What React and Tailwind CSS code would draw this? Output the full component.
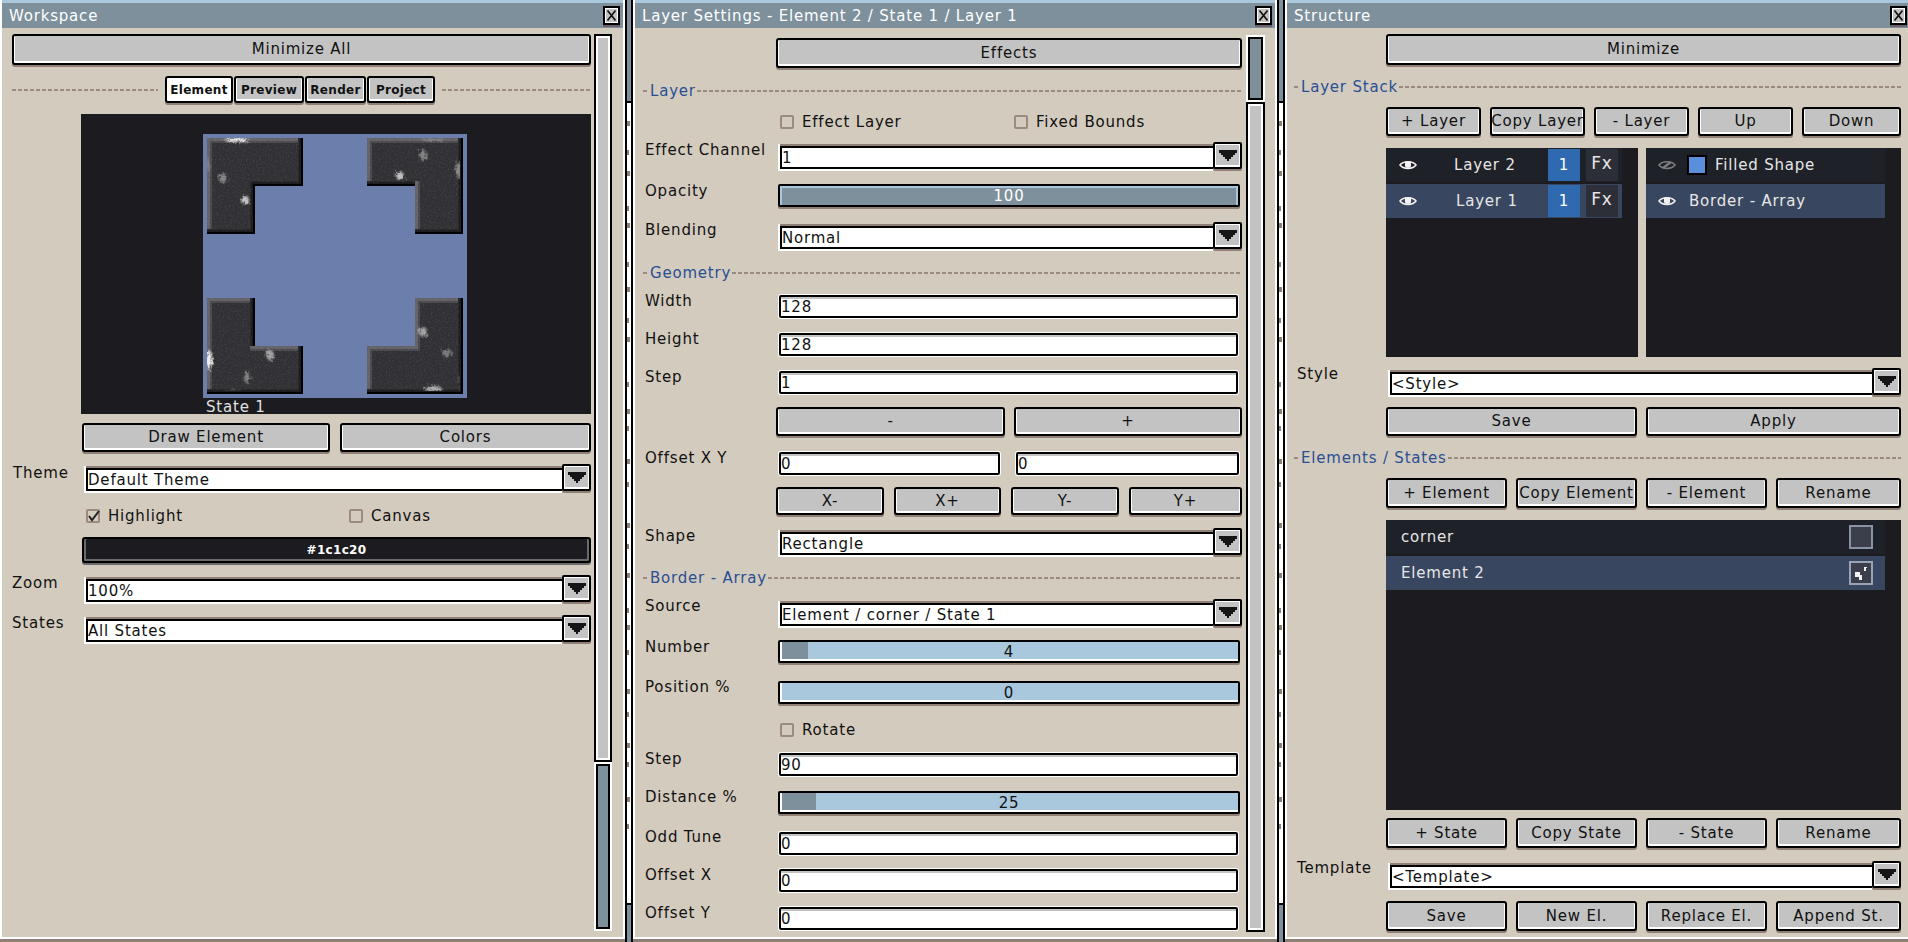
// shared button look: black outline, white inner edge, brown drop line
const btn =
  "flex items-center justify-center overflow-hidden whitespace-nowrap border-2 border-black rounded-[3px] bg-[#c3c3c3] text-[#111] shadow-[inset_1px_-2px_0_#fff,inset_-1px_0_0_#fff,0_2px_0_#8f7f75]";

function Button({ children, className = "" }) {
  return <div className={`${btn} ${className}`}>{children}</div>;
}

function Label({ children, className = "" }) {
  return <div className={`h-[16px] leading-[16px] whitespace-nowrap text-[#111] ${className}`}>{children}</div>;
}

function Dashes({ className = "" }) {
  return (
    <div className={`h-[2px] bg-[repeating-linear-gradient(90deg,#9a8a80_0_4px,transparent_4px_6px)] ${className}`} />
  );
}

function Section({ title, className = "" }) {
  return (
    <div className={`flex h-[16px] items-center ${className}`}>
      <Dashes className="w-[6px] shrink-0" />
      <span className="px-[1px] leading-[16px] text-[#2a4f94]">{title}</span>
      <Dashes className="flex-1" />
    </div>
  );
}

function Dropdown({ value, className = "" }) {
  return (
    <div className={`flex h-[29px] flex-1 ${className}`}>
      <div className="mt-[2px] h-[27px] min-w-0 flex-1 border-y-2 border-l-2 border-white">
        <div className="flex h-[23px] items-center border-y-2 border-l-2 border-black bg-white pt-[2px] leading-none whitespace-nowrap text-[#111] shadow-[0_-2px_0_#8f7f75]">
          {value}
        </div>
      </div>
      <div className="flex h-[27px] w-[29px] shrink-0 items-center justify-center rounded-[2px] border-2 border-black bg-[#c3c3c3] shadow-[inset_1px_1px_0_#fff,inset_-1px_-2px_0_#fff,0_2px_0_#8f7f75]">
        <svg width="18" height="11" viewBox="0 0 18 11">
          <path d="M0 0h18v3h-2v2h-2v2h-2v2h-2v2H8V9H6V7H4V5H2V3H0z" fill="#151515" />
        </svg>
      </div>
    </div>
  );
}

function TextInput({ value, className = "" }) {
  return (
    <div className={`h-[23px] rounded-[2px] border-2 border-black bg-white leading-none whitespace-nowrap text-[#111] shadow-[0_0_0_1px_#fff,inset_0_2px_0_#c3c3c3] ${className}`}>
      <div className="flex h-full items-center pt-[1px]">{value}</div>
    </div>
  );
}

function Slider({ value, fill = 0, active, className = "" }) {
  return (
    <div className={`relative flex h-[23px] items-center justify-center rounded-[2px] border-2 border-black pt-[1px] leading-none shadow-[inset_2px_-2px_0_#fff,0_2px_0_#8f7f75] ${active ? "bg-[#7d909c] text-white shadow-[inset_2px_2px_0_#a9c8de,inset_-2px_0_0_#a9c8de,0_2px_0_#8f7f75]" : "bg-[#a9c8de] text-[#111]"} ${className}`}>
      {fill > 0 && <div className="absolute top-0 bottom-[2px] left-[2px] bg-[#7d909c]" style={{ width: fill }} />}
      <span className="relative">{value}</span>
    </div>
  );
}

function Check({ label, checked, className = "" }) {
  return (
    <div className={`flex h-[16px] items-center ${className}`}>
      <div className="relative h-[14px] w-[14px] shrink-0 rounded-[2px] border-2 border-[#9a8a80]">
        {checked && (
          <svg className="absolute -top-[3px] -left-[2px]" width="16" height="16" viewBox="0 0 16 16">
            <path d="M3 8l3 4 7-9" fill="none" stroke="#222" strokeWidth="2" />
          </svg>
        )}
      </div>
      <span className="ml-[8px] leading-[16px] whitespace-nowrap text-[#111]">{label}</span>
    </div>
  );
}

function Scrollbar({ thumbFirst, thumbClass, className = "" }) {
  const thumb = (
    <div className={`shrink-0 border-2 border-white ${thumbClass}`}>
      <div className="h-full border-2 border-black bg-[#7d909c]" />
    </div>
  );
  return (
    <div className={`flex shrink-0 flex-col ${className}`}>
      {thumbFirst && thumb}
      <div className="flex-1 border-2 border-black bg-[#c3c3c3] shadow-[inset_2px_2px_0_#fff,inset_-2px_-2px_0_#fff]" />
      {!thumbFirst && thumb}
    </div>
  );
}

function TitleBar({ title, className = "" }) {
  return (
    <div className={`flex h-[28px] shrink-0 items-start justify-between border-t-[3px] border-[#a9c7dd] bg-[#7d909c] pl-[7px] text-white ${className}`}>
      <span className="mt-[5px] leading-[16px] whitespace-nowrap">{title}</span>
      <div className="mt-[3px] flex h-[19px] w-[17px] items-center justify-center border-2 border-black bg-[#c3c3c3] shadow-[inset_0_0_0_1px_#fff,0_2px_0_#6e6068]">
        <svg width="9" height="11" viewBox="0 0 9 11">
          <path d="M0.5 0.5l8 10M8.5 0.5l-8 10" stroke="#111" strokeWidth="1.6" fill="none" />
        </svg>
      </div>
    </div>
  );
}

// the marble L pieces in the element preview
const S = 96;
const A = 48;
function lPoints(kind, x, y, [l, t, r, b]) {
  const p = {
    tl: [[l, t], [S - r, t], [S - r, A - b], [A - r, A - b], [A - r, S - b], [l, S - b]],
    tr: [[l, t], [S - r, t], [S - r, S - b], [S - A + l, S - b], [S - A + l, A - b], [l, A - b]],
    bl: [[l, t], [A - r, t], [A - r, S - A + t], [S - r, S - A + t], [S - r, S - b], [l, S - b]],
    br: [[S - A + l, t], [S - r, t], [S - r, S - b], [l, S - b], [l, S - A + t], [S - A + l, S - A + t]],
  }[kind];
  return p.map(([a, c]) => `${x + a},${y + c}`).join(" ");
}

const corners = [
  { kind: "tl", x: 4, y: 4, blobs: [[34, 6, 12, 2, 0.9], [20, 44, 4, 5, 0.4], [42, 66, 4, 4, 0.7], [5, 30, 1, 8, 0.25]] },
  { kind: "tr", x: 164, y: 4, blobs: [[220, 21, 3, 6, 0.4], [197, 42, 4, 4, 0.7], [256, 36, 3, 9, 0.45], [230, 6, 12, 1, 0.3]] },
  { kind: "bl", x: 4, y: 164, blobs: [[6, 226, 3, 10, 0.9], [67, 221, 4, 5, 0.55], [44, 243, 3, 6, 0.4], [30, 257, 8, 1, 0.2]] },
  { kind: "br", x: 164, y: 164, blobs: [[220, 198, 4, 5, 0.55], [244, 219, 5, 4, 0.35], [230, 255, 9, 3, 0.6], [258, 250, 2, 8, 0.2]] },
];

function Preview() {
  return (
    <svg width="264" height="264" viewBox="0 0 264 264" className="block shrink-0">
      <defs>
        <filter id="speck" x="0" y="0" width="100%" height="100%">
          <feTurbulence type="fractalNoise" baseFrequency="0.6" numOctaves="2" seed="4" />
          <feColorMatrix values="0 0 0 0 1  0 0 0 0 1  0 0 0 0 1  0 0 0 0.7 -0.33" />
        </filter>
        <filter id="soft" x="-60%" y="-60%" width="220%" height="220%">
          <feGaussianBlur stdDeviation="1.2" result="b" />
          <feTurbulence type="fractalNoise" baseFrequency="0.35" numOctaves="2" seed="9" />
          <feDisplacementMap in="b" scale="7" />
        </filter>
        {corners.map((c) => (
          <clipPath id={`clip-${c.kind}`} key={c.kind}>
            <polygon points={lPoints(c.kind, c.x, c.y, [0, 0, 3, 3])} />
          </clipPath>
        ))}
      </defs>
      <rect width="264" height="264" fill="#6b7eac" />
      {corners.map((c) => (
        <g key={c.kind}>
          <g shapeRendering="crispEdges">
            <polygon points={lPoints(c.kind, c.x, c.y, [0, 0, 0, 0])} fill="#000" />
            <polygon points={lPoints(c.kind, c.x, c.y, [0, 0, 2, 2])} fill="#1d1d20" />
            <polygon points={lPoints(c.kind, c.x, c.y, [0, 0, 4, 4])} fill="#28282b" />
            <polygon points={lPoints(c.kind, c.x, c.y, [0, 0, 5, 5])} fill="#636367" />
            <polygon points={lPoints(c.kind, c.x, c.y, [3, 3, 5, 5])} fill="#4a4a4e" />
            <polygon points={lPoints(c.kind, c.x, c.y, [5, 5, 5, 5])} fill="#313135" />
          </g>
          <g clipPath={`url(#clip-${c.kind})`}>
            <rect x={c.x} y={c.y} width={S} height={S} filter="url(#speck)" opacity="0.35" />
            {c.blobs.map(([cx, cy, rx, ry, o], i) => (
              <ellipse key={i} cx={cx} cy={cy} rx={rx} ry={ry} fill="#fff" opacity={o} filter="url(#soft)" />
            ))}
          </g>
        </g>
      ))}
    </svg>
  );
}

function Eye({ off }) {
  const c = off ? "#7c7c80" : "#f2f2f2";
  return (
    <svg width="18" height="12" viewBox="0 0 18 12" className="shrink-0">
      <path d="M1 6C4 1.5 14 1.5 17 6C14 10.5 4 10.5 1 6Z" fill="none" stroke={c} strokeWidth="1.5" />
      {off ? (
        <path d="M5 9L13 3" stroke={c} strokeWidth="2.4" />
      ) : (
        <path d="M6 2.5h6v4a3 2.5 0 0 1-6 0z" fill={c} />
      )}
    </svg>
  );
}

function LayerRow({ name, selected, nameClass }) {
  return (
    <div className={`flex h-[34px] w-[236px] items-center pl-[13px] ${selected ? "bg-[#39465f]" : "bg-[#1f2128]"}`}>
      <Eye />
      <span className={`leading-none whitespace-nowrap text-[#e6e6e6] ${nameClass}`}>{name}</span>
      <div className="ml-auto flex h-[32px] w-[32px] items-center justify-center bg-[#2f6ab0] text-white">1</div>
      <div className="mr-[4px] ml-[6px] flex h-[32px] w-[32px] items-start justify-center bg-[#2d2f38] pt-[6px] text-[17px] leading-none text-[#e6e6e6]">Fx</div>
    </div>
  );
}

const gapMarks = [18, 24, 16, 30, 12, 34, 20, 26, 14, 40, 22, 12, 28, 18, 36, 16, 24, 30, 12, 20, 34, 18, 26, 14, 30, 22];

function GapColumn() {
  return (
    <div className="flex w-[8px] shrink-0 flex-col border-x-2 border-black bg-white">
      <div className="h-[103px] shrink-0 border-b-2 border-black bg-[#7d909c]" />
      <div className="flex-1 overflow-hidden">
        {gapMarks.map((m, i) => (
          <div key={i} className={`h-[5px] bg-[#8f7f75] ${i % 2 ? "w-[2px]" : "w-[3px]"}`} style={{ marginTop: m }} />
        ))}
      </div>
      <div className="h-[39px] shrink-0 border-t-2 border-black bg-[#7d909c]" />
    </div>
  );
}

function Panel({ width, title, titleClass, children, noRight }) {
  return (
    <div className={`flex h-[942px] shrink-0 flex-col ${width}`}>
      <div className={`flex min-h-0 flex-1 flex-col border-b-2 border-l-2 border-white ${noRight ? "" : "border-r-2"}`}>
        <TitleBar title={title} className={titleClass} />
        <div className="flex min-h-0 flex-1">{children}</div>
      </div>
      <div className="h-[3px] shrink-0 bg-[#8f7f75]" />
    </div>
  );
}

function Workspace() {
  return (
    <Panel width="w-[625px]" title="Workspace" titleClass="pr-[3px]">
      <div className="ml-[10px] w-[579px]">
        <Button className="mt-[6px] h-[31px]">Minimize All</Button>

        <div className="mt-[11px] flex h-[27px] items-center">
          <Dashes className="w-[146px]" />
          <div className="ml-[7px] flex gap-[1px] text-[12px] font-bold tracking-[0.3px]">
            <Button className="h-[27px] w-[68px] bg-white">Element</Button>
            <Button className="h-[27px] w-[70px]">Preview</Button>
            <Button className="h-[27px] w-[61px]">Render</Button>
            <Button className="h-[27px] w-[68px]">Project</Button>
          </div>
          <Dashes className="ml-[7px] flex-1" />
        </div>

        <div className="mt-[11px] ml-[69px] flex h-[300px] flex-col overflow-hidden bg-[#1c1c20] pt-[20px] pl-[122px]">
          <Preview />
          <div className="mt-[1px] ml-[3px] leading-[16px] text-[#e0e0e0]">State 1</div>
        </div>

        <div className="mt-[9px] ml-[70px] flex gap-[10px]">
          <Button className="h-[29px] w-[248px]">Draw Element</Button>
          <Button className="h-[29px] flex-1">Colors</Button>
        </div>

        <div className="mt-[12px] flex">
          <Label className="mt-[1px] w-[72px] pl-[1px]">Theme</Label>
          <Dropdown value="Default Theme" />
        </div>

        <div className="mt-[15px] ml-[74px] flex">
          <Check label="Highlight" checked className="w-[263px]" />
          <Check label="Canvas" />
        </div>

        <div className="mt-[13px] ml-[70px] flex h-[26px] items-center justify-center rounded-[3px] border-2 border-black bg-[#1c1c20] text-[12px] font-bold tracking-[0.3px] text-white shadow-[inset_2px_0_0_#6a6a6a,inset_-2px_-2px_0_#6a6a6a,0_2px_0_#6a6a6a]">
          #1c1c20
        </div>

        <div className="mt-[12px] flex">
          <Label className="w-[72px]">Zoom</Label>
          <Dropdown value="100%" />
        </div>

        <div className="mt-[11px] flex">
          <Label className="w-[72px]">States</Label>
          <Dropdown value="All States" />
        </div>
      </div>
      <Scrollbar thumbClass="h-[169px]" className="mt-[6px] ml-[3px] h-[897px] w-[18px]" />
    </Panel>
  );
}

function Row({ label, children, className = "", labelClass = "-mt-[2px]" }) {
  return (
    <div className={`flex ${className}`}>
      <Label className={`w-[133px] shrink-0 pl-[2px] ${labelClass}`}>{label}</Label>
      <div className="flex min-w-0 flex-1">{children}</div>
    </div>
  );
}

function LayerSettings() {
  return (
    <Panel width="w-[644px]" title="Layer Settings - Element 2 / State 1 / Layer 1" titleClass="pr-[3px]">
      <div className="ml-[8px] w-[599px]">
        <Button className="mt-[10px] ml-[133px] h-[30px]">Effects</Button>

        <Section title="Layer" className="mt-[15px]" />
        <div className="mt-[15px] ml-[137px] flex">
          <Check label="Effect Layer" className="w-[234px]" />
          <Check label="Fixed Bounds" />
        </div>
        <Row label="Effect Channel" className="mt-[12px]" labelClass="mt-0">
          <Dropdown value="1" className="ml-[2px]" />
        </Row>
        <Row label="Opacity" className="mt-[13px]" labelClass="-mt-[1px]">
          <Slider value="100" active className="mr-[2px] ml-[2px] flex-1" />
        </Row>
        <Row label="Blending" className="mt-[15px]" labelClass="mt-0">
          <Dropdown value="Normal" className="ml-[2px]" />
        </Row>

        <Section title="Geometry" className="mt-[14px]" />
        <Row label="Width" className="mt-[14px]">
          <TextInput value="128" className="mr-[4px] ml-[3px] flex-1" />
        </Row>
        <Row label="Height" className="mt-[15px]">
          <TextInput value="128" className="mr-[4px] ml-[3px] flex-1" />
        </Row>
        <Row label="Step" className="mt-[15px]">
          <TextInput value="1" className="mr-[4px] ml-[3px] flex-1" />
        </Row>
        <div className="mt-[13px] ml-[133px] flex gap-[9px]">
          <Button className="h-[29px] w-[229px]">-</Button>
          <Button className="h-[29px] flex-1">+</Button>
        </div>
        <Row label="Offset X Y" className="mt-[16px]">
          <TextInput value="0" className="ml-[3px] w-[221px]" />
          <TextInput value="0" className="mr-[3px] ml-[16px] flex-1" />
        </Row>
        <div className="mt-[12px] ml-[133px] flex gap-[10px]">
          <Button className="h-[28px] w-[108px]">X-</Button>
          <Button className="h-[28px] w-[107px]">X+</Button>
          <Button className="h-[28px] w-[108px]">Y-</Button>
          <Button className="h-[28px] flex-1">Y+</Button>
        </div>
        <Row label="Shape" className="mt-[13px]" labelClass="mt-0">
          <Dropdown value="Rectangle" className="ml-[2px]" />
        </Row>

        <Section title="Border - Array" className="mt-[13px]" />
        <Row label="Source" className="mt-[13px]" labelClass="-mt-[1px]">
          <Dropdown value="Element / corner / State 1" className="ml-[2px]" />
        </Row>
        <Row label="Number" className="mt-[12px]" labelClass="-mt-[1px]">
          <Slider value="4" fill={26} className="mr-[2px] ml-[2px] flex-1" />
        </Row>
        <Row label="Position %" className="mt-[18px]">
          <Slider value="0" className="mr-[2px] ml-[2px] flex-1" />
        </Row>
        <div className="mt-[18px] ml-[137px]">
          <Check label="Rotate" />
        </div>
        <Row label="Step" className="mt-[15px]">
          <TextInput value="90" className="mr-[4px] ml-[3px] flex-1" />
        </Row>
        <Row label="Distance %" className="mt-[15px]">
          <Slider value="25" fill={34} className="mr-[2px] ml-[2px] flex-1" />
        </Row>
        <Row label="Odd Tune" className="mt-[18px]" labelClass="-mt-[3px]">
          <TextInput value="0" className="mr-[4px] ml-[3px] flex-1" />
        </Row>
        <Row label="Offset X" className="mt-[14px]">
          <TextInput value="0" className="mr-[4px] ml-[3px] flex-1" />
        </Row>
        <Row label="Offset Y" className="mt-[15px]">
          <TextInput value="0" className="mr-[4px] ml-[3px] flex-1" />
        </Row>
      </div>
      <Scrollbar thumbFirst thumbClass="h-[67px]" className="mt-[7px] ml-[4px] h-[897px] w-[19px]" />
    </Panel>
  );
}

function Structure() {
  return (
    <Panel width="w-[623px]" title="Structure" titleClass="pr-[1px]" noRight>
      <div className="ml-[7px] w-[607px]">
        <Button className="mt-[6px] ml-[92px] h-[31px]">Minimize</Button>

        <Section title="Layer Stack" className="mt-[14px]" />
        <div className="mt-[12px] ml-[92px] flex gap-[9px]">
          <Button className="h-[29px] w-[95px]">+ Layer</Button>
          <Button className="h-[29px] w-[95px]">Copy Layer</Button>
          <Button className="h-[29px] w-[95px]">- Layer</Button>
          <Button className="h-[29px] w-[95px]">Up</Button>
          <Button className="h-[29px] flex-1">Down</Button>
        </div>

        <div className="mt-[12px] ml-[92px] flex h-[209px] gap-[8px]">
          <div className="w-[252px] bg-[#1b1b20]">
            <LayerRow name="Layer 2" nameClass="ml-[37px]" />
            <div className="h-[2px]" />
            <LayerRow name="Layer 1" selected nameClass="ml-[39px]" />
          </div>
          <div className="flex-1 bg-[#1b1b20]">
            <div className="flex h-[34px] w-[239px] items-center bg-[#1f2128] pl-[12px]">
              <Eye off />
              <div className="ml-[11px] h-[20px] w-[20px] border-2 border-black bg-[#5a8fdc]" />
              <span className="ml-[8px] leading-none whitespace-nowrap text-[#e6e6e6]">Filled Shape</span>
            </div>
            <div className="h-[2px]" />
            <div className="flex h-[34px] w-[239px] items-center bg-[#39465f] pl-[12px]">
              <Eye />
              <span className="ml-[13px] leading-none whitespace-nowrap text-[#e6e6e6]">Border - Array</span>
            </div>
          </div>
        </div>

        <div className="mt-[11px] flex">
          <Label className="-mt-[2px] w-[92px] shrink-0 pl-[3px]">Style</Label>
          <Dropdown value="<Style>" className="ml-[2px]" />
        </div>

        <div className="mt-[10px] ml-[92px] flex gap-[9px]">
          <Button className="h-[29px] w-[251px]">Save</Button>
          <Button className="h-[29px] flex-1">Apply</Button>
        </div>

        <Section title="Elements / States" className="mt-[14px]" />
        <div className="mt-[12px] ml-[92px] flex gap-[9px]">
          <Button className="h-[30px] w-[121px]">+ Element</Button>
          <Button className="h-[30px] w-[121px]">Copy Element</Button>
          <Button className="h-[30px] w-[121px]">- Element</Button>
          <Button className="h-[30px] flex-1">Rename</Button>
        </div>

        <div className="mt-[12px] ml-[92px] h-[290px] bg-[#1b1b20]">
          <div className="flex h-[34px] w-[499px] items-center justify-between bg-[#1f2128] pr-[12px] pl-[15px]">
            <span className="leading-none text-[#e6e6e6]">corner</span>
            <div className="h-[24px] w-[24px] border-2 border-[#8a93a5] bg-[#3a3f4b]" />
          </div>
          <div className="h-[2px]" />
          <div className="flex h-[34px] w-[499px] items-center justify-between bg-[#39465f] pr-[12px] pl-[15px]">
            <span className="leading-none text-[#e6e6e6]">Element 2</span>
            <div className="h-[24px] w-[24px] border-2 border-[#9aa3b5] bg-[#3a3f4b]">
              <svg width="20" height="20" viewBox="0 0 20 20" shapeRendering="crispEdges">
                <path d="M4 9h5v3h2v5H8v-3H4zM13 4h3v1h-1v3h-2z" fill="#f2f2f2" />
              </svg>
            </div>
          </div>
        </div>

        <div className="mt-[8px] ml-[92px] flex gap-[9px]">
          <Button className="h-[30px] w-[121px]">+ State</Button>
          <Button className="h-[30px] w-[121px]">Copy State</Button>
          <Button className="h-[30px] w-[121px]">- State</Button>
          <Button className="h-[30px] flex-1">Rename</Button>
        </div>

        <div className="mt-[13px] flex">
          <Label className="-mt-[1px] w-[92px] shrink-0 pl-[3px]">Template</Label>
          <Dropdown value="<Template>" className="ml-[2px]" />
        </div>

        <div className="mt-[11px] ml-[92px] flex gap-[9px]">
          <Button className="h-[30px] w-[121px]">Save</Button>
          <Button className="h-[30px] w-[121px]">New El.</Button>
          <Button className="h-[30px] w-[121px]">Replace El.</Button>
          <Button className="h-[30px] flex-1">Append St.</Button>
        </div>
      </div>
    </Panel>
  );
}

export default function App() {
  return (
    <div className="flex h-[942px] w-[1908px] overflow-hidden bg-[#d3cbbd] [font-family:'DejaVu_Sans',sans-serif] text-[15px] tracking-[0.8px]">
      <Workspace />
      <GapColumn />
      <LayerSettings />
      <GapColumn />
      <Structure />
    </div>
  );
}
